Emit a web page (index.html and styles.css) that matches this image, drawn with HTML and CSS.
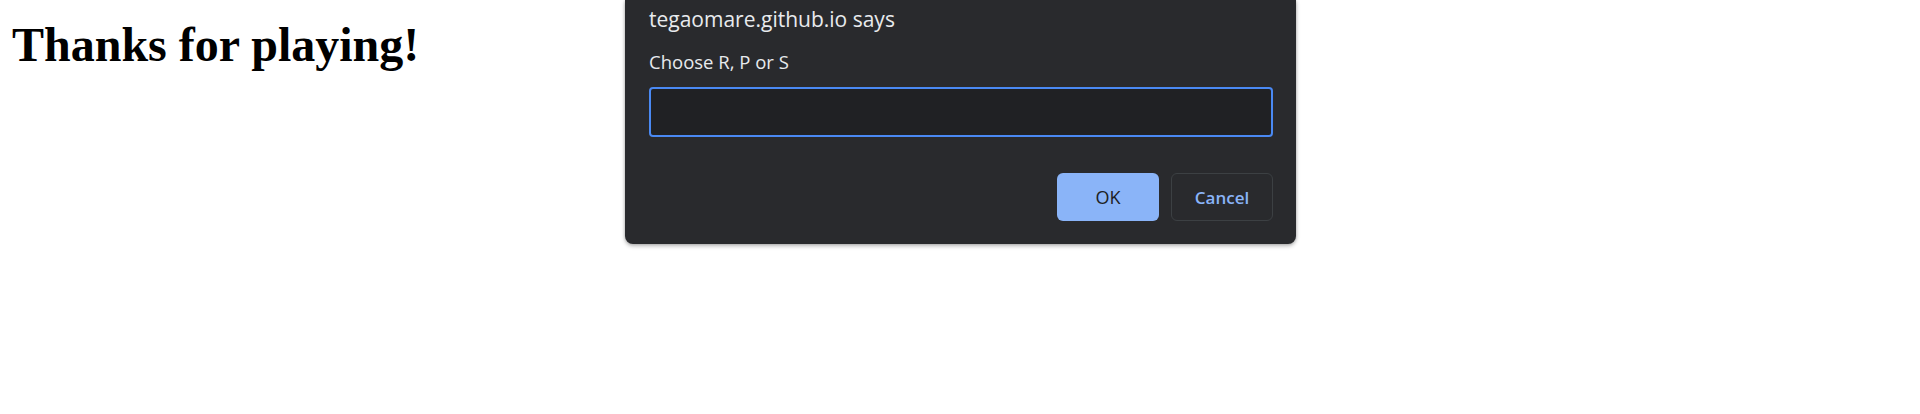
FILE: index.html
```html
<!DOCTYPE html>
<html lang="en">
<head>
<meta charset="utf-8">
<title>Rock Paper Scissors</title>
<link rel="stylesheet" href="styles.css">
</head>
<body>
  <h1 class="heading">Thanks for playing!</h1>

  <div class="dialog" role="dialog">
    <div class="dialog-title">tegaomare.github.io says</div>
    <div class="dialog-message">Choose R, P or S</div>
    <div class="dialog-input"></div>
    <div class="dialog-buttons">
      <button class="btn btn-ok">OK</button>
      <button class="btn btn-cancel">Cancel</button>
    </div>
  </div>
</body>
</html>
```

FILE: styles.css
```css
html, body {
  margin: 0;
  padding: 0;
  background: #ffffff;
}

body {
  width: 1920px;
  height: 414px;
  overflow: hidden;
  position: relative;
}

.heading {
  margin: 17px 0 0 12px;
  font-family: "Liberation Serif", "Times New Roman", serif;
  font-weight: bold;
  font-size: 48px;
  line-height: 1.15;
  color: #000000;
}

.dialog {
  position: absolute;
  left: 625px;
  top: 0;
  width: 671px;
  box-sizing: border-box;
  padding: 5px 23px 23px 24px;
  background: #292a2d;
  border-radius: 0 0 8px 8px;
  box-shadow: 0 2px 4px rgba(0, 0, 0, 0.28), 0 0 3px rgba(0, 0, 0, 0.18);
  font-family: "Open Sans", "Noto Sans", sans-serif;
  color: #e8eaed;
}

.dialog-title {
  font-size: 21px;
  line-height: 28px;
  color: #e8eaed;
}

.dialog-message {
  margin-top: 17px;
  font-size: 18.5px;
  line-height: 24px;
  color: #e8eaed;
}

.dialog-input {
  margin-top: 13px;
  height: 50px;
  box-sizing: border-box;
  border: 2px solid #4a89f3;
  border-radius: 4px;
  background: #202124;
}

.dialog-buttons {
  margin-top: 36px;
  display: flex;
  justify-content: flex-end;
  gap: 12px;
}

.btn {
  width: 102px;
  height: 48px;
  box-sizing: border-box;
  border-radius: 6px;
  font-family: "Open Sans", "Noto Sans", sans-serif;
  font-size: 18px;
  padding: 0;
  cursor: pointer;
}

.btn-ok {
  background: #8ab4f8;
  border: none;
  color: #202124;
}

.btn-cancel {
  background: transparent;
  border: 1px solid #3c4043;
  color: #8ab4f8;
  font-weight: 600;
  font-size: 17px;
}
```
